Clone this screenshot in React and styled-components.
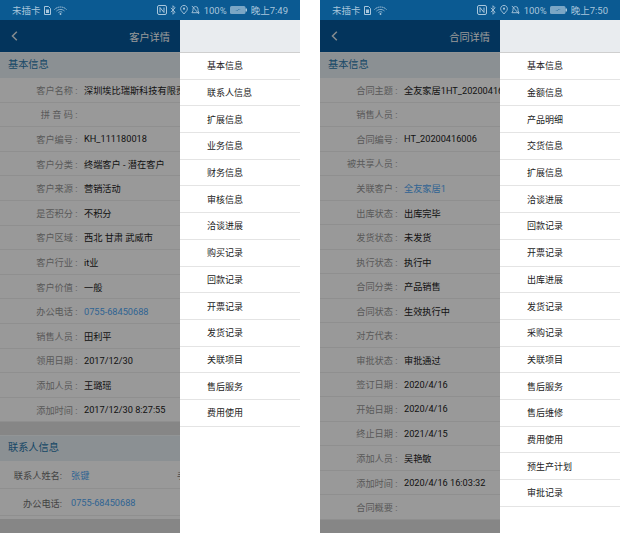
import React from 'react'
import styled, { createGlobalStyle } from 'styled-components'

const GlobalStyle = createGlobalStyle`
html, body {
    margin: 0;
    padding: 0;
    background: #fff;
    font-family: 'Roboto', 'Noto Sans CJK SC', sans-serif;
}
`

const Page = styled.div`
width: 620px;
height: 533px;
overflow: hidden;
display: flex;
gap: 20px;
`

const Phone = styled.div`
width: 300px;
height: 533px;
position: relative;
overflow: hidden;
background: #dfdfdf;
display: flex;
flex-direction: column;
`

const StatusBar = styled.div`
height: 20px;
flex: none;
background: #0b5a92;
color: #a9c6dc;
font-size: 9.5px;
display: flex;
align-items: center;
justify-content: space-between;
padding: 0 12px;
`

const StatusGroup = styled.div`
display: flex;
align-items: center;
gap: ${props => props.$gap}px;
`

const Header = styled.div`
height: 32px;
flex: none;
background: #05589a;
color: #fff;
font-size: 10.2px;
display: flex;
align-items: center;
justify-content: space-between;
padding: 0 130px 0 11px;
`

const Content = styled.div`
flex: 1;
min-height: 0;
width: 180px;
overflow: hidden;
`

const Section = styled.div`
background: #fff;
margin-bottom: 13px;
padding-bottom: ${props => props.$pad}px;
`

const SectionTitle = styled.div`
height: 26px;
box-sizing: border-box;
border-top: 1px solid #f4f8fb;
background: #e8f0f5;
color: #2a78ac;
font-size: 10.2px;
line-height: 24px;
padding-left: 8px;
`

const Row = styled.div`
height: ${props => props.$height}px;
box-sizing: border-box;
padding-top: ${props => props.$top}px;
display: flex;
align-items: center;
font-size: 9.2px;
white-space: pre;
overflow: hidden;
border-bottom: 1px solid #eee;
`

const RowMain = styled.div`
flex: none;
width: ${props => props.$wide ? '177px' : '100%'};
display: flex;
align-items: center;
`

const Label = styled.span`
width: ${props => props.$width}px;
flex: none;
text-align: right;
color: ${props => props.$dark ? '#707070' : '#969696'};
padding-right: ${props => props.$pad}px;
box-sizing: border-box;
`

const Value = styled.span`
color: ${props => props.$link ? '#52a8f5' : '#222'};
`

const SideLabel = styled.span`
flex: none;
color: #707070;
`

const Overlay = styled.div`
position: absolute;
inset: 20px 0 0 0;
background: rgba(0, 0, 0, 0.4);
`

const Drawer = styled.div`
position: absolute;
top: 20px;
left: 180px;
right: 0;
bottom: 0;
background: #fff;
`

const DrawerTop = styled.div`
height: 33px;
background: #e9ecef;
border-bottom: 1px solid #cfcfcf;
box-sizing: border-box;
`

const DrawerItem = styled.div`
height: 26.7px;
box-sizing: border-box;
padding-left: 27px;
display: flex;
align-items: center;
font-size: 9px;
color: #222;
border-bottom: 1px solid #e4e4e4;
`

const BackIcon = () => (
    <svg width="7" height="10" viewBox="0 0 7 10">
        <path d="M5.8 0.8 L1.5 5 L5.8 9.2" fill="none" stroke="#dfe8ef" strokeWidth="1.5" />
    </svg>
)

const NfcIcon = () => (
    <svg width="10" height="10" viewBox="0 0 10 10">
        <rect x="0.5" y="0.5" width="9" height="9" rx="1.5" fill="none" stroke="#a9c6dc" />
        <path d="M3 2.5v5M7 2.5v5M3 2.5l4 5" fill="none" stroke="#a9c6dc" />
    </svg>
)

const BluetoothIcon = () => (
    <svg width="6" height="10" viewBox="0 0 7 11">
        <path d="M1 3l5 5-2.5 2.5v-10L6 3 1 8" fill="none" stroke="#a9c6dc" />
    </svg>
)

const PinIcon = () => (
    <svg width="8" height="10" viewBox="0 0 9 11">
        <path d="M4.5 10 L1.2 6 A3.8 3.8 0 1 1 7.8 6 Z" fill="none" stroke="#a9c6dc" />
        <circle cx="4.5" cy="4" r="1.2" fill="#a9c6dc" />
    </svg>
)

const BellOffIcon = () => (
    <svg width="9" height="10" viewBox="0 0 10 11">
        <path d="M1 8.5h8L7.8 6.5V4.5a2.8 2.8 0 0 0-5.6 0v2z" fill="none" stroke="#a9c6dc" />
        <path d="M1 1l8 9" stroke="#a9c6dc" />
    </svg>
)

const BatteryIcon = () => (
    <svg width="17" height="8" viewBox="0 0 17 8">
        <rect x="0" y="0" width="15.5" height="8" rx="1.5" fill="#a9c6dc" opacity="0.7" />
        <rect x="15.5" y="2.5" width="1.5" height="3" fill="#a9c6dc" />
        <path d="M5 4.5h3V3l3 .5H8V5z" fill="#0b5a92" />
    </svg>
)

const SimIcon = () => (
    <svg width="7" height="9" viewBox="0 0 7 9">
        <path d="M0.5 0.5h4L6.5 2.5V8.5H0.5z" fill="none" stroke="#a9c6dc" />
        <rect x="2" y="3.5" width="3" height="3.5" fill="#a9c6dc" />
    </svg>
)

const WifiIcon = () => (
    <svg width="13" height="9" viewBox="0 0 13 9">
        <path d="M.5 3.5a8.5 8.5 0 0 1 12 0M2.5 5a6 6 0 0 1 8 0M4.5 6.5a3 3 0 0 1 4 0" fill="none" stroke="#a9c6dc" strokeDasharray="1.5 .5" />
        <circle cx="6.5" cy="8" r="0.9" fill="#a9c6dc" />
    </svg>
)

const PhoneScreen = ({ time, title, sections, menu }) => (
    <Phone>
        <StatusBar>
            <StatusGroup $gap={3}>
                未插卡<SimIcon /><WifiIcon />
            </StatusGroup>
            <StatusGroup $gap={3.5}>
                <NfcIcon /><BluetoothIcon /><PinIcon /><BellOffIcon />
                <span>100%</span>
                <BatteryIcon />
                <span>晚上{time}</span>
            </StatusGroup>
        </StatusBar>
        <Header>
            <BackIcon />
            <span>{title}</span>
        </Header>
        <Content>
            {sections.map(section => (
                <Section key={section.title} $pad={section.bottomPad}>
                    <SectionTitle>{section.title}</SectionTitle>
                    {section.rows.map(([label, value, link, side]) => (
                        <Row key={label} $height={section.rowHeight} $top={section.rowTop}>
                            <RowMain $wide={side}>
                                <Label $width={section.labelWidth} $dark={section.darkLabel} $pad={section.labelPad}>{label}{section.sep}</Label>
                                <Value $link={link}>{value}</Value>
                            </RowMain>
                            {side && <SideLabel>{side}</SideLabel>}
                        </Row>
                    ))}
                </Section>
            ))}
        </Content>
        <Overlay />
        <Drawer>
            <DrawerTop />
            {menu.map(item => <DrawerItem key={item}>{item}</DrawerItem>)}
        </Drawer>
    </Phone>
)

const customer = [
    {
        title: '基本信息',
        labelWidth: 84,
        labelPad: 6.5,
        sep: ' :',
        rowHeight: 24.6,
        rowTop: 0,
        bottomPad: 0,
        rows: [
            ['客户名称', '深圳埃比瑞斯科技有限责任公司'],
            ['拼 音 码', ''],
            ['客户编号', 'KH_111180018'],
            ['客户分类', '终端客户 - 潜在客户'],
            ['客户来源', '营销活动'],
            ['是否积分', '不积分'],
            ['客户区域', '西北 甘肃 武威市'],
            ['客户行业', 'it业'],
            ['客户价值', '一般'],
            ['办公电话', '0755-68450688', true],
            ['销售人员', '田利平'],
            ['领用日期', '2017/12/30'],
            ['添加人员', '王璐瑶'],
            ['添加时间', '2017/12/30 8:27:55'],
        ],
    },
    {
        title: '联系人信息',
        labelWidth: 71,
        labelPad: 9,
        sep: ':',
        rowHeight: 27.4,
        rowTop: 1.5,
        bottomPad: 3,
        darkLabel: true,
        rows: [
            ['联系人姓名', '张键', true, '手机号码:'],
            ['办公电话', '0755-68450688', true],
        ],
    },
]

const contract = [
    {
        title: '基本信息',
        labelWidth: 84,
        labelPad: 6.5,
        sep: ' :',
        rowHeight: 24.55,
        rowTop: 0,
        bottomPad: 0,
        rows: [
            ['合同主题', '全友家居1HT_20200416006'],
            ['销售人员', ''],
            ['合同编号', 'HT_20200416006'],
            ['被共享人员', ''],
            ['关联客户', '全友家居1', true],
            ['出库状态', '出库完毕'],
            ['发货状态', '未发货'],
            ['执行状态', '执行中'],
            ['合同分类', '产品销售'],
            ['合同状态', '生效执行中'],
            ['对方代表', ''],
            ['审批状态', '审批通过'],
            ['签订日期', '2020/4/16'],
            ['开始日期', '2020/4/16'],
            ['终止日期', '2021/4/15'],
            ['添加人员', '吴艳敏'],
            ['添加时间', '2020/4/16 16:03:32'],
            ['合同概要', ''],
        ],
    },
]

const customerMenu = ['基本信息', '联系人信息', '扩展信息', '业务信息', '财务信息', '审核信息', '洽谈进展', '购买记录', '回款记录', '开票记录', '发货记录', '关联项目', '售后服务', '费用使用']
const contractMenu = ['基本信息', '金额信息', '产品明细', '交货信息', '扩展信息', '洽谈进展', '回款记录', '开票记录', '出库进展', '发货记录', '采购记录', '关联项目', '售后服务', '售后维修', '费用使用', '预生产计划', '审批记录']

const App = () => (
    <Page>
        <GlobalStyle />
        <PhoneScreen time="7:49" title="客户详情" sections={customer} menu={customerMenu} />
        <PhoneScreen time="7:50" title="合同详情" sections={contract} menu={contractMenu} />
    </Page>
)

export default App
